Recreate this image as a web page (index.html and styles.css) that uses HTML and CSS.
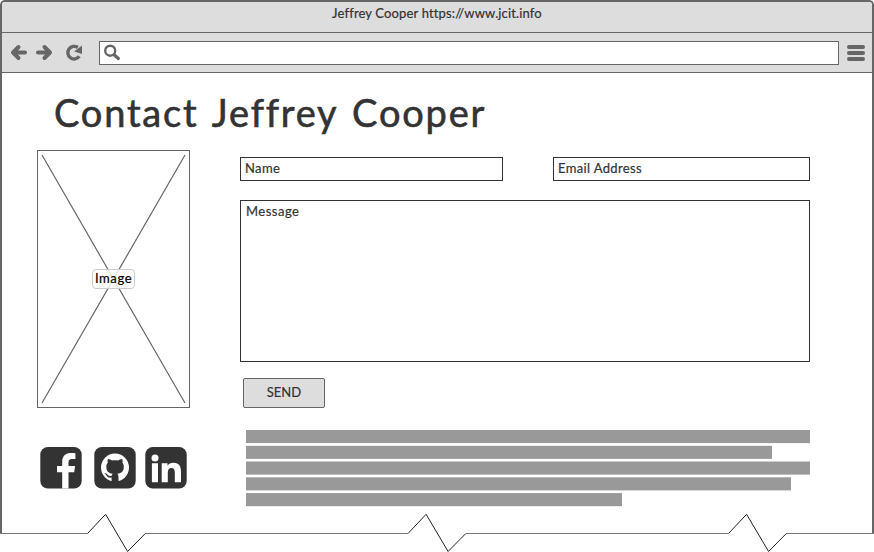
FILE: index.html
```html
<!DOCTYPE html>
<html lang="en">
<head>
<meta charset="utf-8">
<title>Jeffrey Cooper</title>
<link rel="stylesheet" href="styles.css">
</head>
<body>
<div class="window">
  <header class="chrome">
    <div class="titlebar"><span class="window-title">Jeffrey Cooper https://www.jcit.info</span></div>
    <nav class="toolbar">
      <svg class="nav-icons" width="98" height="39" viewBox="0 33 98 39" fill="none" stroke="#666" stroke-width="4" stroke-linecap="round" stroke-linejoin="round">
        <path d="M13 52.500H25M18.500 47L13 52.500L18.500 58"/>
        <path d="M38 52.500H50M44.500 47L50 52.500L44.500 58"/>
        <path d="M79.300 56.300A6.300 6.300 0 1 1 77.800 47.500" stroke-width="3.400" stroke-linecap="butt"/>
        <path d="M82 45.500V54L74.200 51.500Z" fill="#666" stroke="none"/>
      </svg>
      <div class="address">
        <svg width="20" height="22" viewBox="0 0 20 22" fill="none" stroke="#666" stroke-linecap="round">
          <circle cx="10.200" cy="8.700" r="5" stroke-width="2.400"/>
          <path d="M14.300 12.800L18.300 16.500" stroke-width="3.200"/>
        </svg>
      </div>
      <div class="menu"><i></i><i></i><i></i></div>
    </nav>
  </header>
  <main class="page">
    <h1>Contact Jeffrey Cooper</h1>
    <div class="columns">
      <aside class="side">
        <div class="image">
          <svg width="151" height="256" viewBox="0 0 151 256" stroke="#666" stroke-width="1.200"><path d="M4 4L147 252M147 4L4 252"/></svg>
          <span class="image-label">Image</span>
        </div>
        <div class="social">
          <svg width="42" height="42" viewBox="0 0 42 42"><rect x=".3" y=".1" width="41.400" height="41.400" rx="7.500" fill="#333"/><path fill="#fff" d="M22.200 41.500V25.200H17V19H22.200V15C22.200 8.800 25.600 6 30.700 6C32.800 6 34.800 6.200 35.400 6.300V12H32C29.300 12 28.500 13.300 28.500 15.300V19H35.100L34.200 25.200H28.500V41.500Z"/></svg>
          <svg width="42" height="42" viewBox="0 0 42 42"><rect x=".3" y=".1" width="41.400" height="41.400" rx="7.500" fill="#333"/><circle cx="21" cy="20.600" r="14" fill="#fff"/><path fill="#333" d="M17.600 35.500V30.500C15 31 13.300 30.200 12.300 28.300C11.700 27 11 26.500 10.300 26C11.900 25.600 13 26.800 13.800 28C14.700 29.200 16 29.200 17.700 28.700C17.900 27.700 18.300 27.200 18.800 26.700C15 26.200 12.300 24.600 12.300 19.700C12.300 18 12.900 16.700 13.800 15.700C13.400 14.600 13.500 13.200 14 12C15.500 12 17 12.800 18.200 13.500C20 13 22.200 13 24 13.500C25.200 12.800 26.700 12 28.200 12C28.700 13.200 28.800 14.600 28.400 15.700C29.300 16.700 29.800 18 29.800 19.700C29.800 24.600 27.200 26.200 23.300 26.700C24.100 27.400 24.500 28.400 24.500 29.700V35.500Z"/></svg>
          <svg width="42" height="42" viewBox="0 0 42 42"><rect x=".3" y=".1" width="41.400" height="41.400" rx="7.500" fill="#333"/><circle cx="10" cy="10.900" r="3.500" fill="#fff"/><path fill="#fff" d="M6.900 16.200H13V35.200H6.900ZM16.700 16.200H22.500V18.700C23.600 16.900 25.700 15.700 28.500 15.700C34.300 15.700 36 19.400 36 24.900V35.200H29.800V26C29.800 23 29.100 21.100 26.500 21.100C23.900 21.100 22.800 23 22.800 25.700V35.200H16.700Z"/></svg>
        </div>
      </aside>
      <section class="form">
        <div class="fields">
          <div class="field"><span class="name">Name</span></div>
          <div class="field"><span class="email">Email Address</span></div>
        </div>
        <div class="message"><span>Message</span></div>
        <button class="send">SEND</button>
        <svg class="copy" width="564" height="77" viewBox="0 0 564 77" fill="#999">
          <rect width="564" height="13.100"/><rect y="15.800" width="526" height="13.100"/><rect y="31.500" width="564" height="13.100"/><rect y="47.300" width="545" height="13.100"/><rect y="63.100" width="376" height="13.100"/>
        </svg>
      </section>
    </div>
  </main>
  <svg class="tear" width="874" height="40" viewBox="0 512 874 40" fill="none">
    <path stroke="#777" d="M0 533.500H87.500M145 533.500H408M466 533.500H728.500M786 533.500H874"/>
    <path stroke="#222" d="M87.500 533.500L105.600 514.300L127.600 551.500L145.300 533.500M408 533.500L426.100 514.300L448.100 551.500L465.800 533.500M728.500 533.500L746.600 514.300L768.600 551.500L786.300 533.500"/>
  </svg>
</div>
</body>
</html>
```
FILE: styles.css
```css
* { box-sizing: border-box; }
body {
  margin: 0;
  height: 552px;
  background: #fff;
  color: #333;
  font: 13px/16px Lato, "Liberation Sans", sans-serif;
  -webkit-text-stroke: .2px currentColor;
}
svg { display: block; flex: none; }
.window {
  position: relative;
  width: 874px;
  height: 534px;
  border: 2px solid #666;
  border-bottom: 0;
  border-radius: 5px 5px 0 0;
}
.chrome { background: #ddd; border-radius: 3px 3px 0 0; }
.titlebar {
  height: 31px;
  padding-top: 3px;
  border-bottom: 1px solid #666;
  text-align: center;
}
.window-title { letter-spacing: .15px; }
.toolbar {
  display: flex;
  align-items: center;
  height: 40px;
  padding-right: 7px;
  border-bottom: 1px solid #666;
}
.nav-icons { margin-left: -2px; margin-right: 1px; }
.address {
  width: 740px;
  height: 24px;
  border: 1px solid #666;
  background: #fff;
}
.menu { display: grid; gap: 2px; margin-left: 8px; }
.menu i { width: 18px; height: 4px; border-radius: 2px; background: #666; }
.page { padding: 0 62px 0 35px; }
h1 {
  height: 77px;
  margin: 0;
  padding: 14px 0 0 17px;
  font-size: 38px;
  line-height: 50px;
  font-weight: 400;
  letter-spacing: 1.8px;
  word-spacing: 3px;
  white-space: nowrap;
  -webkit-text-stroke: .6px currentColor;
}
.columns { display: grid; grid-template-columns: 153px 570px; gap: 50px; }
.image {
  display: grid;
  place-items: center;
  height: 258px;
  border: 1px solid #666;
}
.image > * { grid-area: 1 / 1; }
.image-label {
  z-index: 1;
  height: 20px;
  padding: 0 2px;
  border: 1px solid #ccc;
  border-radius: 4px;
  background: rgba(255, 255, 255, .82);
  color: #000;
  letter-spacing: .6px;
}
.social { display: flex; gap: 12px; margin: 39px 0 0 3px; }
.social svg:last-child { margin-left: -3px; }
.form { padding-top: 7px; }
.fields { display: grid; grid-template-columns: 263px 257px; gap: 50px; }
.field { height: 24px; padding: 2px 4px; border: 1px solid #333; }
.name, .email { letter-spacing: .35px; }
.message span { letter-spacing: .5px; }
.message { height: 162px; margin-top: 19px; padding: 2px 5px; border: 1px solid #333; }
.send {
  display: block;
  width: 82px;
  height: 30px;
  margin: 16px 0 22px 3px;
  padding: 0 0 2px;
  border: 1px solid #666;
  border-radius: 2px;
  background: #ddd;
  color: #333;
  font: inherit;
}
.copy { margin-left: 6px; }
.tear { position: absolute; left: -2px; top: 510px; }
```
